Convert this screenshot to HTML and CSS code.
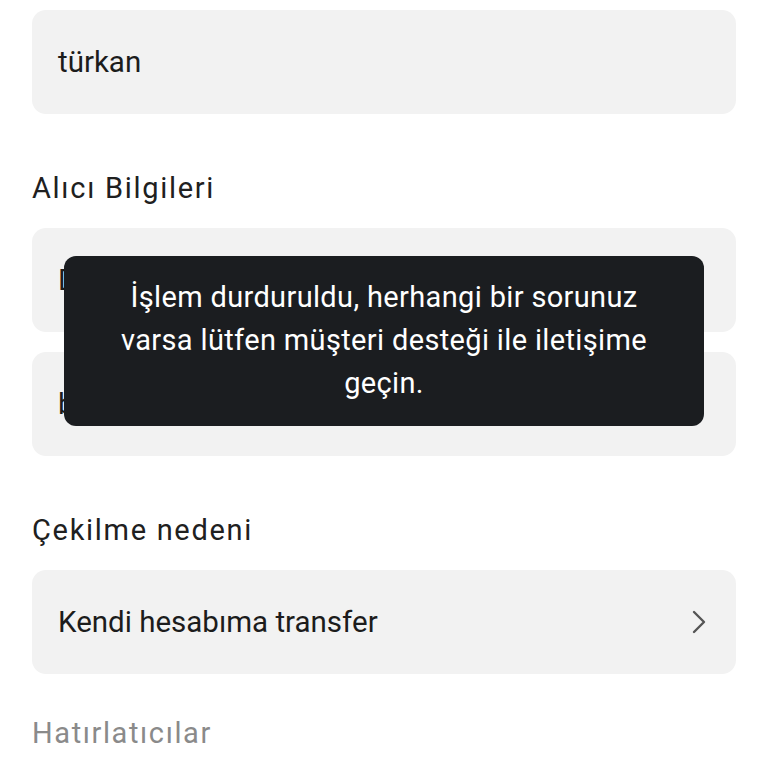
FILE: index.html
```html
<!DOCTYPE html>
<html lang="tr">
<head>
<meta charset="utf-8">
<link rel="stylesheet" href="styles.css">
</head>
<body>
<div class="page">
  <div class="field field-first"><span class="value">türkan</span></div>
  <div class="label">Alıcı Bilgileri</div>
  <div class="field"><span class="value">Deniz Yıl</span></div>
  <div class="field field-next"><span class="value">banka</span></div>
  <div class="label">Çekilme nedeni</div>
  <div class="field select">
    <span class="value">Kendi hesabıma transfer</span>
    <svg class="chevron" width="18" height="26" viewBox="0 0 18 26"><polyline points="4,3 14,13 4,23" fill="none" stroke="#555555" stroke-width="2.4" stroke-linecap="round" stroke-linejoin="round"/></svg>
  </div>
  <div class="label label-muted">Hatırlatıcılar</div>

  <div class="toast">İşlem durduruldu, herhangi bir sorunuz varsa lütfen müşteri desteği ile iletişime geçin.</div>
</div>
</body>
</html>
```
FILE: styles.css
```css
* { box-sizing: border-box; }
html, body { margin: 0; padding: 0; background: #ffffff; }
body { font-family: Roboto, "Noto Sans", sans-serif; color: #1a1a1a; }
.page {
  position: relative;
  width: 768px;
  height: 768px;
  overflow: hidden;
  padding: 10px 32px 0;
  display: flex;
  flex-direction: column;
}
.field {
  height: 104px;
  background: #f2f2f2;
  border-radius: 14px;
  display: flex;
  align-items: center;
  justify-content: space-between;
  padding: 0 28px 0 26px;
  flex-shrink: 0;
}
.field-next { margin-top: 20px; }
.value {
  font-size: 29.5px;
  line-height: 34px;
  color: #1c1c1c;
}
.label {
  margin-top: 57px;
  margin-bottom: 23px;
  font-size: 29px;
  line-height: 34px;
  color: #202020;
  letter-spacing: 1.7px;
}
.label-muted { margin-top: 42px; color: #8a8a8a; letter-spacing: 1.6px; }
.chevron { display: block; }
.toast {
  position: absolute;
  left: 64px;
  top: 256px;
  width: 640px;
  height: 170px;
  background: #1b1d20;
  border-radius: 12px;
  color: #ffffff;
  font-size: 29px;
  line-height: 43px;
  text-align: center;
  padding: 20px 40px;
  letter-spacing: 0.35px;
}
```
